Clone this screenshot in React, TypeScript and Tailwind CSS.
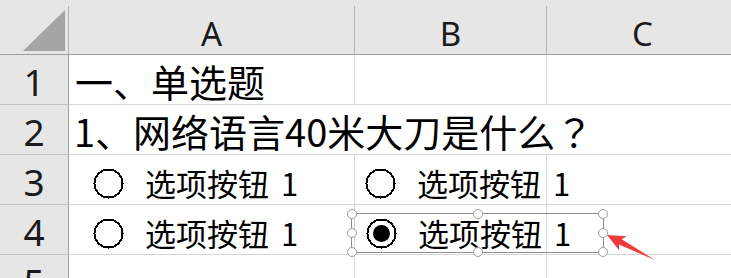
import type { ReactNode } from 'react';

const cjk = { fontFamily: '"Noto Sans CJK SC", "Noto Sans", sans-serif' };
const cjkCentered = { fontFamily: '"Noto Sans CJK JP", "Noto Sans CJK SC", sans-serif' };
const latin = { fontFamily: '"Noto Sans", "Liberation Sans", sans-serif' };

const HeaderSep = () => <div className="w-px h-[48px] self-end shrink-0 bg-[#b3b3b3]" />;

const ColHead = ({ label, w }: { label: string; w: string }) => (
	<div
		className={`${w} shrink-0 flex justify-center pt-[17px] text-[33px] leading-[33px] text-[#1b1b1b]`}
		style={latin}
	>
		{label}
	</div>
);

const RowHead = ({ n }: { n: number }) => (
	<div
		className="w-[69px] shrink-0 flex justify-center pt-[8px] bg-[#e6e6e6] border-r border-b border-r-[#a0a0a0] border-b-[#c4c4c4] text-[37px] leading-[37px] text-[#1b1b1b]"
		style={latin}
	>
		{n}
	</div>
);

const Row = ({ n, children }: { n: number; children?: ReactNode }) => (
	<div className="flex h-[50px] shrink-0">
		<RowHead n={n} />
		{children ?? (
			<>
				<div className="w-[286px] shrink-0 border-r border-b border-[#d6d6d6]" />
				<div className="w-[192px] shrink-0 border-r border-b border-[#d6d6d6]" />
				<div className="w-[191px] shrink-0 border-b border-[#d6d6d6]" />
			</>
		)}
	</div>
);

const Radio = ({ checked }: { checked?: boolean }) => (
	<svg width="31" height="31" viewBox="0 0 31 31" className="shrink-0">
		<circle cx="15.5" cy="15.5" r="14" fill="white" stroke="black" strokeWidth="2" shapeRendering="crispEdges" />
		{checked && <circle cx="15.5" cy="15.5" r="8.5" fill="black" />}
	</svg>
);

const handles = [
	'left-0 top-0',
	'left-1/2 top-0',
	'left-full top-0',
	'left-0 top-1/2',
	'left-full top-1/2',
	'left-0 top-full',
	'left-1/2 top-full',
	'left-full top-full',
];

type RadioControlProps = {
	className: string;
	checked?: boolean;
	selected?: boolean;
};

const RadioControl = ({ className, checked, selected }: RadioControlProps) => (
	<div
		className={`absolute ${className} w-[253px] h-[40px] flex items-center pl-[14px] ${selected ? 'border border-[#8e8e8e]' : ''}`}
	>
		<Radio checked={checked} />
		<span className="ml-[21px] text-[31px] leading-[40px] text-black whitespace-nowrap" style={cjk}>
			选项按钮 <span className="ml-[5px]">1</span>
		</span>
		{selected &&
			handles.map((h) => (
				<div
					key={h}
					className={`absolute ${h} w-[10px] h-[10px] -translate-x-1/2 -translate-y-1/2 rounded-full border-[1.5px] border-[#9d9d9d] bg-white`}
				/>
			))}
	</div>
);

export default function App() {
	return (
		<div className="relative w-[731px] h-[278px] overflow-hidden bg-white">
			{/* column headers */}
			<div className="flex h-[55px] bg-[#e6e6e6] border-b border-[#9f9f9f]">
				<div className="w-[68px] shrink-0 relative">
					<svg width="68" height="54" className="absolute left-0 top-0">
						<polygon points="23,51 65,10 65,51" fill="#a5a5a5" />
					</svg>
				</div>
				<HeaderSep />
				<ColHead label="A" w="w-[285px]" />
				<HeaderSep />
				<ColHead label="B" w="w-[191px]" />
				<HeaderSep />
				<ColHead label="C" w="w-[191px]" />
			</div>

			<Row n={1}>
				<div
					className="w-[286px] shrink-0 flex items-center pl-[6px] pt-[2px] border-r border-b border-[#d6d6d6] text-[38px] leading-[38px] text-black whitespace-nowrap"
					style={cjk}
				>
					一、单选题
				</div>
				<div className="w-[192px] shrink-0 border-r border-b border-[#d6d6d6]" />
				<div className="w-[191px] shrink-0 border-b border-[#d6d6d6]" />
			</Row>
			<Row n={2}>
				<div
					className="w-[669px] shrink-0 flex items-center pl-[5px] pt-[2px] border-b border-[#d6d6d6] text-[38px] leading-[38px] text-black whitespace-nowrap"
					style={cjk}
				>
					1、网络语言40米大刀是什么<span style={cjkCentered}>？</span>
				</div>
			</Row>
			<Row n={3} />
			<Row n={4} />
			<Row n={5} />

			<RadioControl className="left-[79px] top-[163px]" />
			<RadioControl className="left-[351px] top-[163px]" />
			<RadioControl className="left-[79px] top-[213px]" />
			<RadioControl className="left-[351px] top-[213px]" checked selected />

			<svg width="62" height="36" className="absolute left-[600px] top-[228px]">
				<polygon
					points="7,7 26.7,8.2 21.7,11.2 54.9,32 18.9,16.6 19.3,22.4"
					fill="#ee3b3b"
				/>
			</svg>
		</div>
	);
}
